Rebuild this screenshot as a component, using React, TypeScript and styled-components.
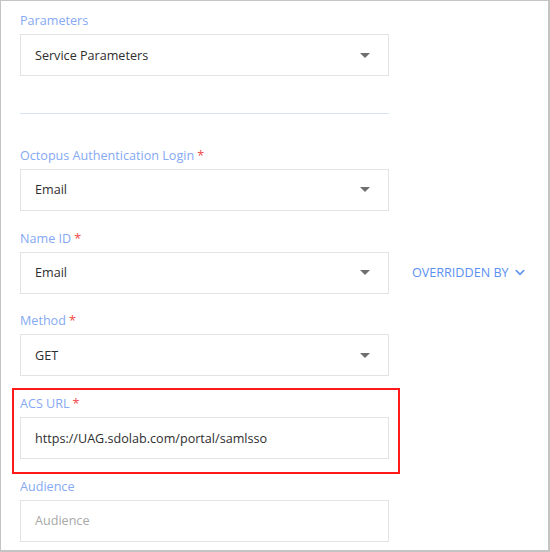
import React from 'react'
import styled, { createGlobalStyle } from 'styled-components'

const GlobalStyle = createGlobalStyle`
  html, body {
    margin: 0;
    padding: 0;
    background: #ffffff;
  }
  body {
    font-family: 'Open Sans', 'Noto Sans', sans-serif;
  }
`

type SelectField = {
  label: string
  value: string
  required?: boolean
  overridden?: boolean
}

const topFields: SelectField[] = [
  { label: 'Octopus Authentication Login', value: 'Email', required: true },
  { label: 'Name ID', value: 'Email', required: true, overridden: true },
  { label: 'Method', value: 'GET', required: true },
]

const Caret: React.FC = () => (
  <svg width="10" height="5" viewBox="0 0 10 5">
    <path d="M0 0h10L5 5z" fill="#6f6f6f" />
  </svg>
)

const Chevron: React.FC = () => (
  <svg width="10" height="7" viewBox="0 0 10 7">
    <path
      d="M1.2 1.5l3.8 3.8 3.8-3.8"
      fill="none"
      stroke="#5b8ff2"
      strokeWidth="1.6"
      strokeLinecap="round"
    />
  </svg>
)

const FieldLabel: React.FC<{ text: string; required?: boolean }> = ({
  text,
  required,
}) => (
  <Label>
    {text}
    {required && <Star>*</Star>}
  </Label>
)

const App: React.FC = () => {
  return (
    <>
      <GlobalStyle />
      <Frame>
        <Field>
          <FieldLabel text="Parameters" />
          <Select>
            <Value>Service Parameters</Value>
            <Caret />
          </Select>
        </Field>

        <Divider />

        {topFields.map((f) => (
          <Field key={f.label}>
            <FieldLabel text={f.label} required={f.required} />
            <Row>
              <Select>
                <Value>{f.value}</Value>
                <Caret />
              </Select>
              {f.overridden && (
                <OverrideLink>
                  OVERRIDDEN BY
                  <Chevron />
                </OverrideLink>
              )}
            </Row>
          </Field>
        ))}

        <Highlighted>
          <FieldLabel text="ACS URL" required />
          <Input>
            <Value>https://UAG.sdolab.com/portal/samlsso</Value>
          </Input>
        </Highlighted>

        <Field>
          <FieldLabel text="Audience" />
          <Input>
            <Value $placeholder>Audience</Value>
          </Input>
        </Field>
      </Frame>
    </>
  )
}

const Frame = styled.div`
  box-sizing: border-box;
  width: 550px;
  height: 552px;
  overflow: hidden;
  border-style: solid;
  border-color: #c4c4c4;
  border-width: 1px 2px 2px 1px;
  padding: 10px 0 0 19px;
  display: flex;
  flex-direction: column;
`

const Field = styled.div`
  display: flex;
  flex-direction: column;
  gap: 3px;
  margin-bottom: 17.75px;
`

const Highlighted = styled(Field)`
  position: relative;

  &::after {
    content: '';
    position: absolute;
    top: -6px;
    left: -8px;
    right: 148px;
    bottom: -15px;
    border: 2.5px solid #ff1a1a;
    pointer-events: none;
  }
`

const Label = styled.div`
  height: 20px;
  line-height: 20px;
  font-size: 12.6px;
  color: #85a9f4;
`

const Star = styled.span`
  color: #f04848;
  margin-left: 3px;
`

const Row = styled.div`
  display: flex;
  align-items: center;
  gap: 23px;
`

const Select = styled.div`
  box-sizing: border-box;
  width: 369px;
  height: 42px;
  border: 1px solid #e3e3e3;
  display: flex;
  align-items: center;
  justify-content: space-between;
  padding: 0 18px 0 14px;
`

const Input = styled(Select)``

const Value = styled.span<{ $placeholder?: boolean }>`
  font-size: 12.6px;
  color: ${(p) => (p.$placeholder ? '#a8a8a8' : '#2e2e2e')};
`

const Divider = styled.hr`
  box-sizing: border-box;
  width: 369px;
  height: 0;
  border: none;
  border-top: 1px solid #d9e2f3;
  margin: 19px 0 32px;
`

const OverrideLink = styled.div`
  display: flex;
  align-items: center;
  gap: 6px;
  font-size: 12.6px;
  color: #5b8ff2;
`

export default App
